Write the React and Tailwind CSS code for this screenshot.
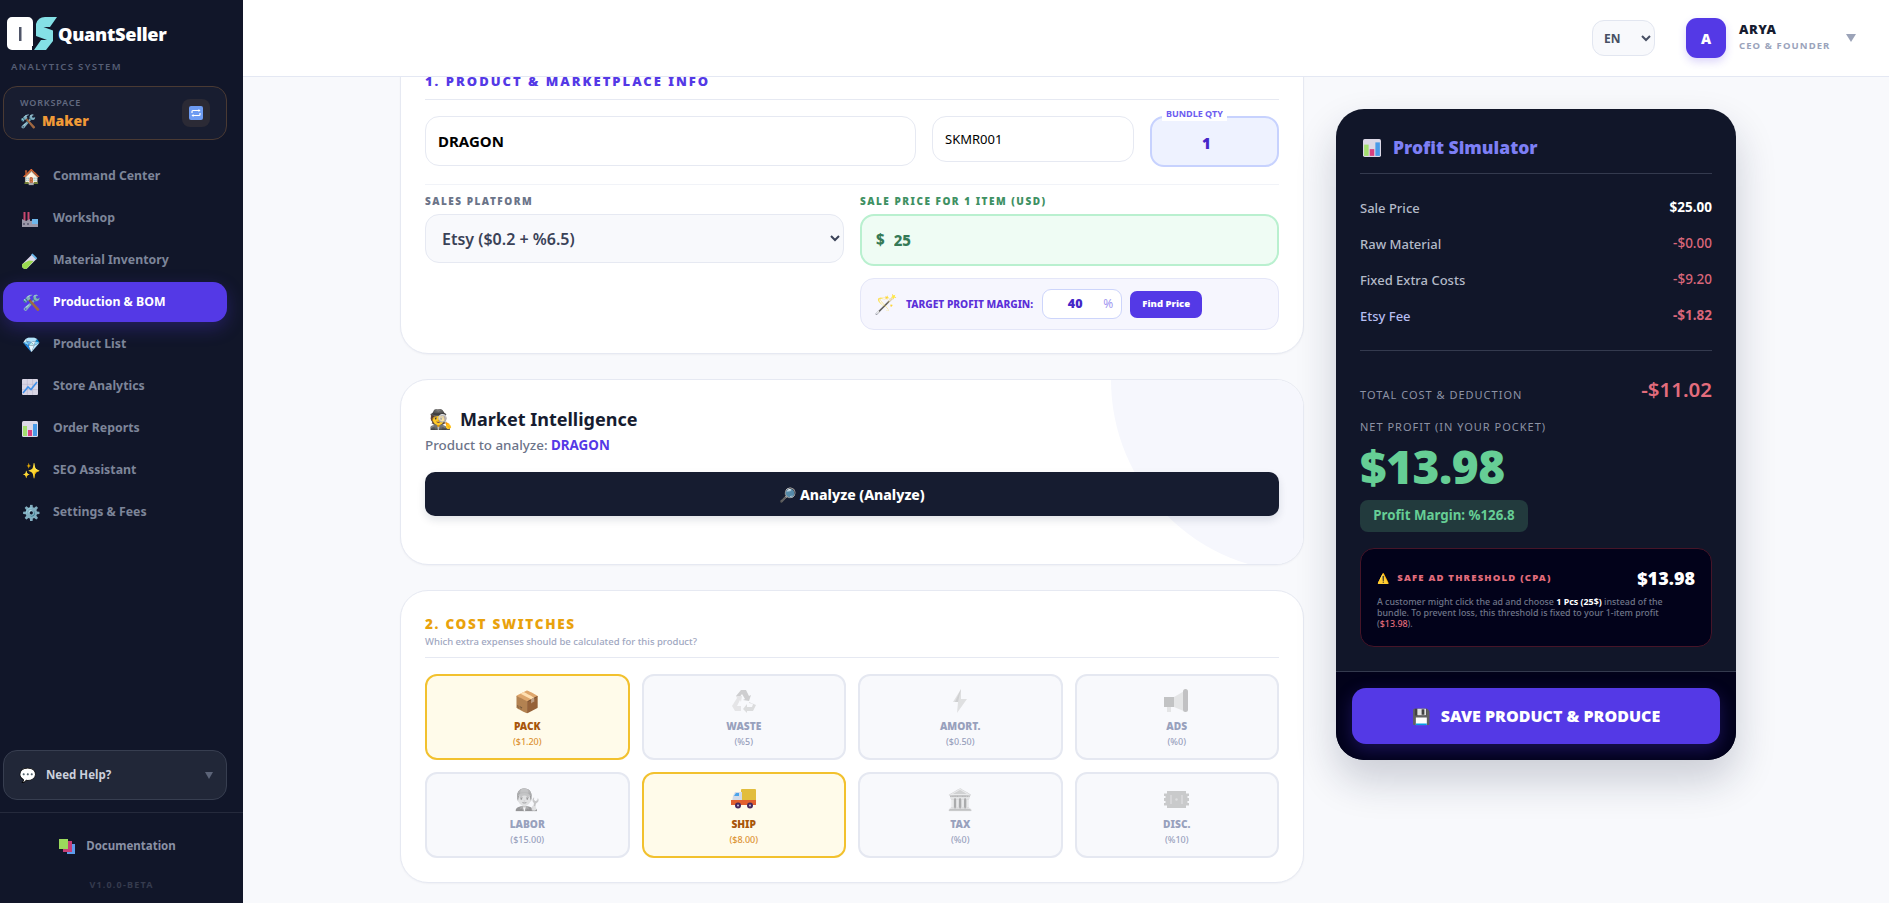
const F = "font-['Noto_Sans','Open_Sans',sans-serif]";

const Bars = ({ s = 16 }) => (
  <svg width={s} height={s} viewBox="0 0 16 16">
    <rect width="16" height="16" rx="1.5" fill="#dcd8e6" />
    <rect x="1" y="5" width="4" height="10" fill="#a3de6e" />
    <rect x="6" y="9" width="4" height="6" fill="#d8407f" />
    <rect x="11" y="3" width="4" height="12" fill="#4a9be8" />
  </svg>
);
const Trend = () => (
  <svg width="16" height="16" viewBox="0 0 16 16">
    <rect width="16" height="16" rx="1" fill="#d9d5e4" />
    <path d="M0 5.3H16M0 10.6H16M5.3 0V16M10.6 0V16" stroke="#b9b4c9" strokeWidth=".6" />
    <path d="M1 14L6 8l3 2.5L15 3" fill="none" stroke="#3f8fe8" strokeWidth="1.6" />
  </svg>
);
const Factory = () => (
  <svg width="16" height="16" viewBox="0 0 16 16">
    <rect x="1.5" y="1" width="2" height="9" fill="#c9476e" />
    <rect x="5.5" y="1" width="2" height="9" fill="#c9476e" />
    <path d="M0 16V8l4 2 4-2v2l8-1v7z" fill="#9b98a8" />
    <rect x="10" y="8" width="6" height="5" fill="#6fb7ea" />
    <rect x="1" y="12" width="2" height="2" fill="#66647a" /><rect x="5" y="12" width="2" height="2" fill="#66647a" />
  </svg>
);
const Tube = () => (
  <svg width="16" height="16" viewBox="0 0 16 16">
    <path d="M10 1.5l4.5 4.5-9 9a3 3 0 0 1-4.500-4.500z" fill="#dcd8ea" />
    <path d="M7 7.500l4.500 .5-6 7a3 3 0 0 1-4.500-4.500z" fill="#9ada4f" />
    <rect x="9" y="2.200" width="7" height="2" rx=".8" transform="rotate(45 12 3)" fill="#6ab7ea" />
  </svg>
);
const Refresh = () => (
  <svg width="14" height="14" viewBox="0 0 14 14">
    <rect width="14" height="14" rx="2" fill="#6d9bf2" />
    <path d="M3 7V5.500a1 1 0 0 1 1-1h6.500M11 7v1.500a1 1 0 0 1-1 1H3.500" fill="none" stroke="#fff" strokeWidth="1.200" />
    <path d="M9.500 3l2 1.500-2 1.500zM4.500 8L2.500 9.500l2 1.500z" fill="#fff" />
  </svg>
);
const Books = () => (
  <svg width="16" height="15" viewBox="0 0 16 15">
    <rect x="8" y="5" width="8" height="10" fill="#5e9cec" />
    <rect x="4" y="2" width="9" height="11" fill="#c53f77" />
    <rect x="0" y="0" width="9" height="10" fill="#9bd95c" />
  </svg>
);
const Megaphone = () => (
  <svg width="25" height="24" viewBox="0 0 25 24">
    <rect x="0" y="8" width="10" height="10" fill="#8e8e93" />
    <path d="M10 8l12-7v22l-12-5z" fill="#d2d2d6" />
    <rect x="19" y="0" width="5" height="23" rx="2.500" fill="#8b8b90" />
    <rect x="3" y="18" width="4" height="5" fill="#d2d2d6" />
  </svg>
);
const Ticket = () => (
  <svg width="25" height="17" viewBox="0 0 25 17">
    <path d="M3 0h19v2.500h3V5h-1.500v2H25v3h-1.500v2H25v2.500h-3V17H3v-2.500H0V12h1.500v-2H0V7h1.500V5H0V2.500h3z" fill="#9c9ca2" />
    <path d="M7 4v9M18 4v9" stroke="#bdbdc2" strokeWidth="1.500" />
    <circle cx="12.500" cy="8.500" r="1.200" fill="#c4c4c8" />
  </svg>
);
const Bolt = () => (
  <svg width="14" height="24" viewBox="0 0 14 24">
    <path d="M8 0L0 13h5l-1 11 10-14H8z" fill="#c8c8cc" />
    <path d="M8 0L2 13h3v0z" fill="#a8a8ae" />
  </svg>
);
const Recycle = () => (
  <svg width="24" height="24" viewBox="0 0 24 24">
    <path d="M9 1h5l3 6 2-1-2 6-6-1 2-1-3-5-3 4-3-2z" fill="#a5a5aa" />
    <path d="M5 9l-5 8 3 5h6v-5H5l3-6 1 2 1-6-6 0z" fill="#d3d3d7" />
    <path d="M17 13l7 3-3 6h-6v2l-4-4 4-5v3h5l1-3-4-1z" fill="#c0c0c5" />
  </svg>
);
const Truck = () => (
  <svg width="25" height="20" viewBox="0 0 25 20">
    <rect x="10" y="0" width="15" height="14" rx="1" fill="#e2bd3c" />
    <path d="M2 7l2-4h7v10H1z" fill="#d3dbe8" />
    <path d="M3 7l2-3h3v3z" fill="#4aa4ea" />
    <rect x="0" y="11" width="25" height="5" fill="#e2602f" />
    <circle cx="7" cy="16.500" r="3" fill="#45295f" /><circle cx="19" cy="16.500" r="3" fill="#45295f" />
    <circle cx="7" cy="16.500" r="1" fill="#c9c2dc" /><circle cx="19" cy="16.500" r="1" fill="#c9c2dc" />
  </svg>
);

const nav = [
  ["🏠", "Command Center"],
  [<Factory />, "Workshop"],
  [<Tube />, "Material Inventory"],
  ["🛠️", "Production & BOM", true],
  ["💎", "Product List"],
  [<Trend />, "Store Analytics"],
  [<Bars />, "Order Reports"],
  ["✨", "SEO Assistant"],
  ["⚙️", "Settings & Fees"],
];

const switches = [
  ["📦", "PACK", "($1.20)", true],
  [<Recycle />, "WASTE", "(%5)"],
  [<Bolt />, "AMORT.", "($0.50)"],
  [<Megaphone />, "ADS", "(%0)"],
  ["👨‍🔧", "LABOR", "($15.00)"],
  [<Truck />, "SHIP", "($8.00)", true],
  ["🏛️", "TAX", "(%0)"],
  [<Ticket />, "DISC.", "(%10)"],
];

function Logo() {
  return (
    <svg width="51" height="34" viewBox="0 0 51 34" className="shrink-0">
      <path d="M5 0h16a5 5 0 0 1 5 5v24l-1 0v4H5a5 5 0 0 1-5-5V5a5 5 0 0 1 5-5z" fill="#fff" />
      <rect x="12" y="10" width="2.500" height="14" fill="#4f5568" />
      <path d="M38 0H50L43 10H36.500L46 13.500V24L39 33H27L34 23H40L29 19V7Q31 0 38 0Z" fill="#84e0e6" />
    </svg>
  );
}

function Sidebar() {
  return (
    <aside className="w-[243px] shrink-0 bg-[#111629] flex flex-col h-full">
      <div className="pl-[7px] pt-[17px] flex items-center h-[51px]">
        <Logo />
        <span className="text-white text-[18.2px] font-black tracking-[-0.3px] leading-none mt-[1px]">QuantSeller</span>
      </div>
      <div className="pl-[11px] mt-[9px] text-[9.5px] font-semibold tracking-[1.35px] leading-[14px] text-[#565e75]">ANALYTICS SYSTEM</div>
      <div className="mx-[3px] mt-[12px] w-[224px] h-[54px] rounded-[14px] border border-[#4a3a33] bg-[#181d30] flex items-center justify-between pl-[16px] pr-[16px]">
        <div className="flex flex-col">
          <span className="text-[9px] font-semibold tracking-[0.8px] leading-[12px] text-[#626a80]">WORKSPACE</span>
          <span className="text-[14px] font-black leading-[18px] text-[#f09a37] mt-[3px] flex items-center gap-[6px]"><span className="text-[13px]">🛠️</span>Maker</span>
        </div>
        <div className="w-[28px] h-[28px] rounded-[8px] bg-[#2b2a35] flex items-center justify-center"><Refresh /></div>
      </div>
      <nav className="mt-[16px] flex flex-col gap-[2px]">
        {nav.map(([icon, label, active]) => (
          <div key={label} className={`mx-[3px] w-[224px] h-[40px] rounded-[14px] flex items-center pl-[19px] pt-[1px] ${active ? "bg-[#5439e6] shadow-[0_6px_18px_rgba(84,57,230,0.3)] text-white" : "text-[#7d8599]"}`}>
            <span className="w-[31px] text-[15px] leading-none">{icon}</span>
            <span className="text-[12.3px] font-bold leading-none">{label}</span>
          </div>
        ))}
      </nav>
      <div className="mt-auto mx-[3px] w-[224px] h-[50px] rounded-[14px] border border-[#373e50] bg-[#212738] flex items-center pl-[15px] pr-[13px]">
        <span className="w-[27px] text-[14px] leading-none">💬</span>
        <span className="text-[11.5px] font-bold text-[#cbd0dc] flex-1">Need Help?</span>
        <span className="w-0 h-0 border-l-[4px] border-r-[4px] border-t-[7px] border-l-transparent border-r-transparent border-t-[#5c6478]"></span>
      </div>
      <div className="mt-[12px] border-t border-[#252a3c] h-[91px] flex flex-col items-center">
        <div className="mt-[24px] pr-[8px] flex items-center gap-[11px] text-[#8a91a5] text-[11.5px] font-bold leading-[18px]"><Books />Documentation</div>
        <div className="mt-[23px] text-[9px] font-bold tracking-[1.2px] leading-[14px] text-[#353b4e]">V1.0.0-BETA</div>
      </div>
    </aside>
  );
}

function Header() {
  return (
    <header className="h-[77px] shrink-0 bg-white border-b border-[#e4e8f3] flex items-center relative z-10">
      <select defaultValue="EN" className="ml-[1349px] w-[63px] h-[36px] rounded-[12px] border border-[#e2e6f0] bg-[#f8f9fc] text-[12px] font-bold text-[#474f63] pl-[7px] pr-0 outline-none">
        <option>EN</option>
      </select>
      <div className="ml-[31px] w-[40px] h-[40px] rounded-[11px] bg-[#5439e6] shadow-[0_4px_8px_rgba(84,57,230,0.2)] text-white font-black text-[14px] flex items-center justify-center">A</div>
      <div className="ml-[13px] flex flex-col -mt-[4px]">
        <span className="text-[13px] font-black leading-[16px] text-[#161c30] tracking-[0.5px]">ARYA</span>
        <span className="text-[9.5px] font-bold leading-[12px] mt-[3px] text-[#9aa3bb] tracking-[1.1px]">CEO &amp; FOUNDER</span>
      </div>
      <span className="ml-[16px] w-0 h-0 border-l-[5px] border-r-[5px] border-t-[8px] border-l-transparent border-r-transparent border-t-[#9ba3b8]"></span>
    </header>
  );
}

function Card({ className = "", children }) {
  return <section className={`w-[904px] bg-white rounded-[28px] border border-[#e6e9f2] shadow-[0_1px_2px_rgba(20,30,60,0.04)] px-[24px] ${className}`}>{children}</section>;
}

function Form() {
  return (
    <div className="flex flex-col">
      <Card className="h-[308px] mt-[-31px] pt-[24px]">
        <h2 className="text-[13px] font-black tracking-[2px] leading-[21px] text-[#5439e6] pb-[7px] border-b border-[#e6e9f2]">1. PRODUCT &amp; MARKETPLACE INFO</h2>
        <div className="flex gap-[16px] mt-[16px] items-start pb-[17px] border-b border-[#f1f3f8]">
          <input readOnly defaultValue="DRAGON" className="w-[491px] h-[50px] rounded-[14px] border border-[#e6e9f2] bg-white px-[12px] text-[15px] font-bold text-black outline-none" />
          <input readOnly defaultValue="SKMR001" className="w-[202px] h-[46px] rounded-[14px] border border-[#e6e9f2] bg-white px-[12px] text-[13px] text-black outline-none" />
          <div className="relative w-[129px] h-[51px]">
            <span className="absolute -top-[9px] left-[12px] bg-white px-[4px] text-[9px] font-bold leading-[14px] text-[#6d5cf0] z-10">BUNDLE QTY</span>
            <input readOnly defaultValue="1" className="w-full h-full rounded-[14px] border-2 border-[#c7d2fe] bg-[#eef2ff] text-center pt-[2px] pr-[16px] text-[15px] font-black text-[#4526c8] outline-none" />
          </div>
        </div>
        <div className="grid grid-cols-2 gap-x-[16px] mt-[8px]">
          <div>
            <label className="block text-[10px] font-black tracking-[1.5px] leading-[16px] text-[#6b7488]">SALES PLATFORM</label>
            <select defaultValue="etsy" className="mt-[5px] w-full h-[49px] rounded-[14px] border border-[#e6e9f2] bg-[#f8f9fc] pl-[12px] pr-[6px] text-[16px] font-semibold text-[#3a4257] outline-none">
              <option value="etsy">Etsy ($0.2 + %6.5)</option>
            </select>
          </div>
          <div>
            <label className="block text-[10px] font-black tracking-[1.5px] leading-[16px] text-[#3f9163]">SALE PRICE FOR 1 ITEM (USD)</label>
            <div className="mt-[5px] h-[52px] rounded-[14px] border-2 border-[#b9f0cf] bg-[#effcf4] flex items-center pl-[14px] text-[#357a56] font-extrabold">
              <span className="text-[15px] -mt-[2px]">$</span>
              <input readOnly defaultValue="25" className="ml-[9px] w-[100px] bg-transparent text-[15px] font-extrabold outline-none text-[#357a56]" />
            </div>
            <div className="mt-[12px] h-[52px] rounded-[14px] border border-[#e4e6f8] bg-[#f6f6fe] flex items-center pl-[13px]">
              <span className="w-[32px] text-[19px] leading-none">🪄</span>
              <span className="text-[10.2px] font-extrabold leading-none text-[#5b2fd8]">TARGET PROFIT MARGIN:</span>
              <div className="ml-[9px] w-[80px] h-[30px] rounded-[9px] border border-[#cdd5fb] bg-white flex items-center">
                <input readOnly defaultValue="40" className="w-[60px] text-center pl-[4px] bg-transparent text-[12.5px] font-black text-[#4526c8] outline-none" />
                <span className="text-[12px] text-[#a197f0]">%</span>
              </div>
              <button className="ml-[8px] w-[72px] h-[27px] rounded-[7px] bg-[#5439e6] text-white text-[9.5px] font-black">Find Price</button>
            </div>
          </div>
        </div>
      </Card>

      <Card className="relative overflow-hidden h-[186px] mt-[25px] pt-[25px]">
        <div className="absolute w-96 h-96 -top-[192px] -right-[192px] rounded-full bg-[#f6f7fd]"></div>
        <div className="relative">
          <h3 className="flex items-center text-[18px] font-bold leading-[28px] text-[#161c30]"><span className="w-[35px] pl-[4px] text-[19px] leading-none">🕵️</span>Market Intelligence</h3>
          <p className="mt-[2px] text-[13.4px] leading-[20px] font-medium text-[#6c7489]">Product to analyze: <b className="text-[#5439e6] font-bold">DRAGON</b></p>
          <button className="mt-[17px] w-full h-[44px] rounded-[10px] bg-[#161c30] shadow-[0_4px_8px_rgba(20,30,60,0.12)] text-white text-[14px] font-extrabold">🔎 Analyze (Analyze)</button>
        </div>
      </Card>

      <Card className="h-[293px] mt-[25px] pt-[24px]">
        <h2 className="text-[13.5px] font-black tracking-[1.7px] leading-[18px] text-[#e9a20c]">2. COST SWITCHES</h2>
        <p className="text-[9.5px] font-medium leading-[14px] text-[#a0a7bf] mt-[2px] pb-[8px] border-b border-[#e6e9f2]">Which extra expenses should be calculated for this product?</p>
        <div className="grid grid-cols-4 gap-x-[12px] gap-y-[12px] mt-[16px]">
          {switches.map(([icon, label, val, on]) => (
            <div key={label} className={`h-[86px] rounded-[12px] border-2 flex flex-col items-center ${on ? "border-[#f2c12e] bg-[#fffbea]" : "border-[#e5e8f1] bg-[#f8f9fc]"}`}>
              <span className={`mt-[12px] h-[26px] flex items-center text-[21px] leading-[26px] ${on ? "" : "grayscale opacity-50"}`}>{icon}</span>
              <span className={`mt-[5px] text-[10.2px] font-black leading-[14px] ${on ? "text-[#a8560b]" : "text-[#98a1bd]"}`}>{label}</span>
              <span className={`mt-[2px] text-[9px] font-medium leading-[14px] ${on ? "text-[#dc9232]" : "text-[#98a1bd]"}`}>{val}</span>
            </div>
          ))}
        </div>
      </Card>
    </div>
  );
}

function Row({ label, value, labelC = "text-[#b4bac8]", valueC = "text-[#d9667a] font-medium" }) {
  return (
    <div className="flex justify-between items-center h-[36px] text-[13px] leading-none">
      <span className={`font-medium ${labelC}`}>{label}</span>
      <span className={`text-[13.5px] ${valueC}`}>{value}</span>
    </div>
  );
}

function Simulator() {
  return (
    <aside className="w-[400px] h-[651px] mt-[32px] ml-[32px] rounded-[28px] bg-[#111629] shadow-[0_20px_40px_rgba(20,30,60,0.2)] overflow-hidden flex flex-col shrink-0">
      <div className="px-[24px] flex-1">
        <div className="h-[65px] border-b border-[#343a4e] flex items-center pt-[13px] pl-[3px]">
          <span className="w-[30px] leading-none"><Bars s={18} /></span>
          <span className="text-[17.5px] font-black text-[#7d7ff5]">Profit Simulator</span>
        </div>
        <div className="mt-[16px]">
          <Row label="Sale Price" value="$25.00" valueC="text-white font-bold" />
          <Row label="Raw Material" value="-$0.00" />
          <Row label="Fixed Extra Costs" value="-$9.20" />
          <Row label="Etsy Fee" value="-$1.82" labelC="text-[#b6bdf0]" valueC="text-[#d9667a] font-bold" />
        </div>
        <div className="mt-[16px] border-t border-[#343a4e] pt-[27px] flex justify-between items-center h-[59px]">
          <span className="text-[11px] tracking-[1px] text-[#8d93a5] mt-[4px]">TOTAL COST &amp; DEDUCTION</span>
          <span className="text-[20.5px] font-semibold text-[#e36c7c] leading-none -mt-[8px]">-$11.02</span>
        </div>
        <div className="mt-[10px] text-[11px] tracking-[1px] leading-[16px] text-[#8d93a5]">NET PROFIT (IN YOUR POCKET)</div>
        <div className="text-[46px] font-black leading-[56px] mt-[3px] tracking-[-0.5px] text-[#66ce95]">$13.98</div>
        <div className="mt-[6px] w-[168px] h-[32px] rounded-[8px] bg-[#223a3d] flex items-center justify-center text-[13.3px] font-bold text-[#66ce95]">Profit Margin: %126.8</div>
        <div className="mt-[16px] h-[99px] rounded-[14px] border border-[#461528] bg-[#02021a] px-[16px] pt-[17px]">
          <div className="flex items-center justify-between h-[24px]">
            <span className="text-[9.5px] font-black tracking-[1.2px] text-[#e36c7c] flex items-center gap-[7px]"><span className="text-[10px]">⚠️</span>SAFE AD THRESHOLD (CPA)</span>
            <span className="text-[18px] font-black text-white">$13.98</span>
          </div>
          <p className="mt-[6px] text-[8.9px] leading-[11px] font-medium text-[#6f7589]">A customer might click the ad and choose <b className="text-white font-bold">1 Pcs (25$)</b> instead of the bundle. To prevent loss, this threshold is fixed to your 1-item profit (<span className="text-[#e36c7c]">$13.98</span>).</p>
        </div>
      </div>
      <div className="h-[89px] bg-[#02021a] border-t border-[#343a4e] px-[16px] pt-[16px]">
        <button className="w-full h-[56px] rounded-[14px] bg-[#5439e6] shadow-[0_6px_18px_rgba(84,57,230,0.3)] text-white text-[16px] font-black flex items-center justify-center gap-[10px]"><span className="text-[15px]">💾</span>SAVE PRODUCT &amp; PRODUCE</button>
      </div>
    </aside>
  );
}

export default function App() {
  return (
    <div className={`h-screen flex overflow-hidden bg-[#f8f9fc] ${F}`}>
      <Sidebar />
      <div className="flex-1 flex flex-col min-w-0">
        <Header />
        <main className="flex-1 overflow-hidden flex items-start pl-[157px]">
          <Form />
          <Simulator />
        </main>
      </div>
    </div>
  );
}
